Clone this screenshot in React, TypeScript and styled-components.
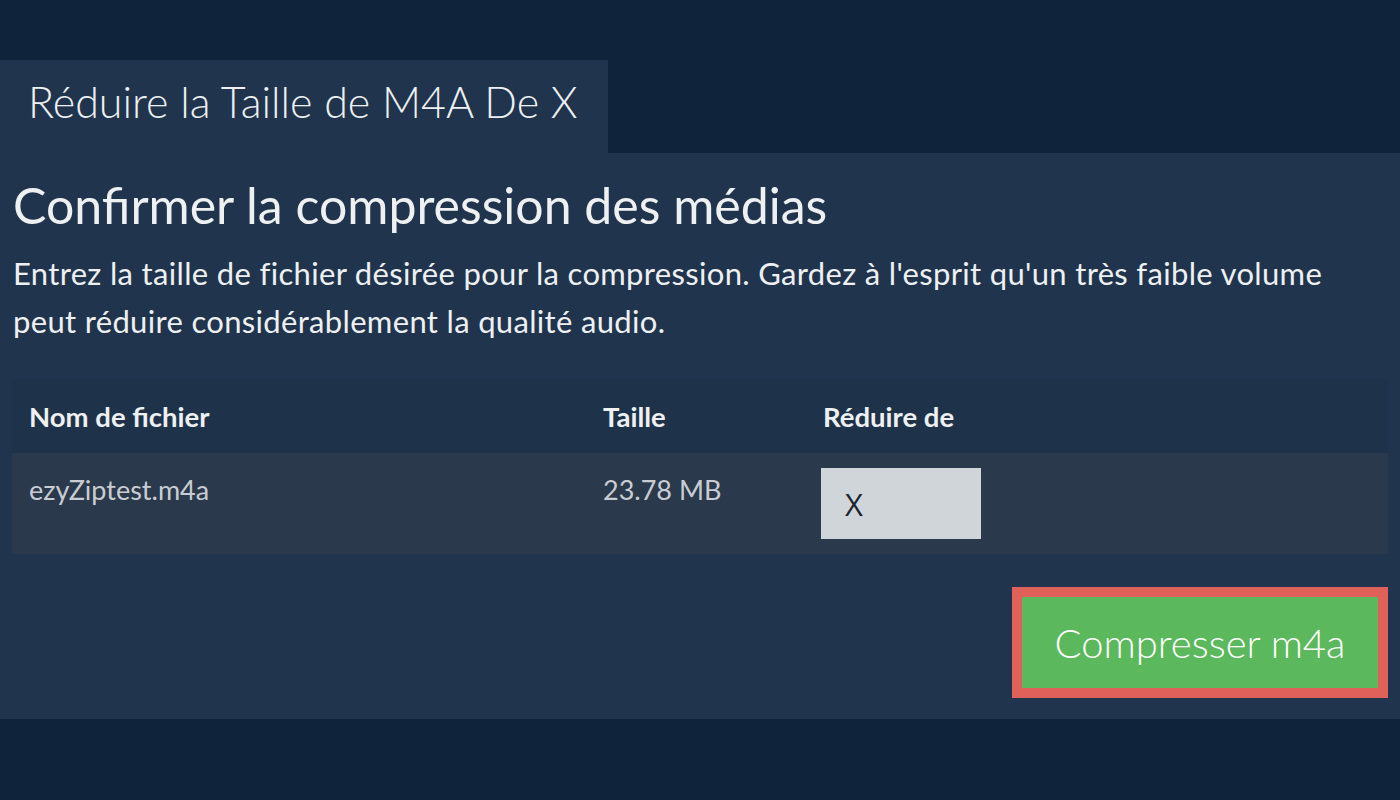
import * as React from 'react';
import styled, { createGlobalStyle } from 'styled-components';

const GlobalStyle = createGlobalStyle`
  html, body {
    margin: 0;
    padding: 0;
    background: #0f233a;
  }
  body {
    font-family: Lato, "Open Sans", sans-serif;
    color: #eef0f2;
  }
`;

const Page = styled.div`
  width: 1400px;
  height: 800px;
  padding-top: 60px;
  box-sizing: border-box;
  background: #0f233a;
`;

const Tab = styled.div`
  width: 608px;
  height: 93px;
  box-sizing: border-box;
  padding: 16px 0 0 28px;
  background: #20354d;
  font-size: 43px;
  font-weight: 300;
  line-height: 52px;
`;

const Panel = styled.div`
  background: #20354d;
  padding: 20px 12px 21px 12px;
  display: flex;
  flex-direction: column;
`;

const Heading = styled.h1`
  margin: 0 0 0 1px;
  font-size: 50px;
  font-weight: 400;
  line-height: 64px;
`;

const Intro = styled.p`
  margin: 12px 0 34px 1px;
  font-size: 31px;
  letter-spacing: 0.33px;
  line-height: 48px;
  max-width: 1370px;
`;

const Table = styled.table`
  width: 100%;
  border-collapse: collapse;
`;

const HeadCell = styled.th<{ $width?: number }>`
  box-sizing: border-box;
  text-align: left;
  font-size: 27.5px;
  font-weight: 700;
  line-height: 34px;
  padding: 21px 17px 19px;
  background: #1e3349;
  width: ${(p) => (p.$width ? `${p.$width}px` : 'auto')};
`;

const Cell = styled.td`
  vertical-align: top;
  font-size: 27px;
  line-height: 34px;
  color: #c9cdd3;
  padding: 20px 17px 15px;
  background: #2a3a4c;
`;

const InputCell = styled(Cell)`
  padding: 15px 15px;
`;

const SizeInput = styled.input`
  width: 160px;
  height: 71px;
  box-sizing: border-box;
  border: none;
  background: #d0d5da;
  color: #1c2430;
  font-family: "Open Sans", Lato, sans-serif;
  font-size: 31px;
  padding: 0 24px;
  outline: none;
`;

const Actions = styled.div`
  display: flex;
  justify-content: flex-end;
  margin-top: 33px;
`;

const CompressButton = styled.button`
  width: 376px;
  height: 111px;
  border: 10px solid #e0605a;
  background: #5cb85c;
  color: #ffffff;
  font-family: Lato, sans-serif;
  font-size: 40px;
  font-weight: 300;
  cursor: pointer;
`;

export default function App() {
  return (
    <Page>
      <GlobalStyle />
      <Tab>Réduire la Taille de M4A De X</Tab>
      <Panel>
        <Heading>Confirmer la compression des médias</Heading>
        <Intro>
          Entrez la taille de fichier désirée pour la compression. Gardez à l'esprit qu'un très faible
          volume peut réduire considérablement la qualité audio.
        </Intro>
        <Table>
          <thead>
            <tr>
              <HeadCell $width={574}>Nom de fichier</HeadCell>
              <HeadCell $width={220}>Taille</HeadCell>
              <HeadCell>Réduire de</HeadCell>
            </tr>
          </thead>
          <tbody>
            <tr>
              <Cell>ezyZiptest.m4a</Cell>
              <Cell>23.78 MB</Cell>
              <InputCell>
                <SizeInput defaultValue="X" />
              </InputCell>
            </tr>
          </tbody>
        </Table>
        <Actions>
          <CompressButton>Compresser m4a</CompressButton>
        </Actions>
      </Panel>
    </Page>
  );
}
